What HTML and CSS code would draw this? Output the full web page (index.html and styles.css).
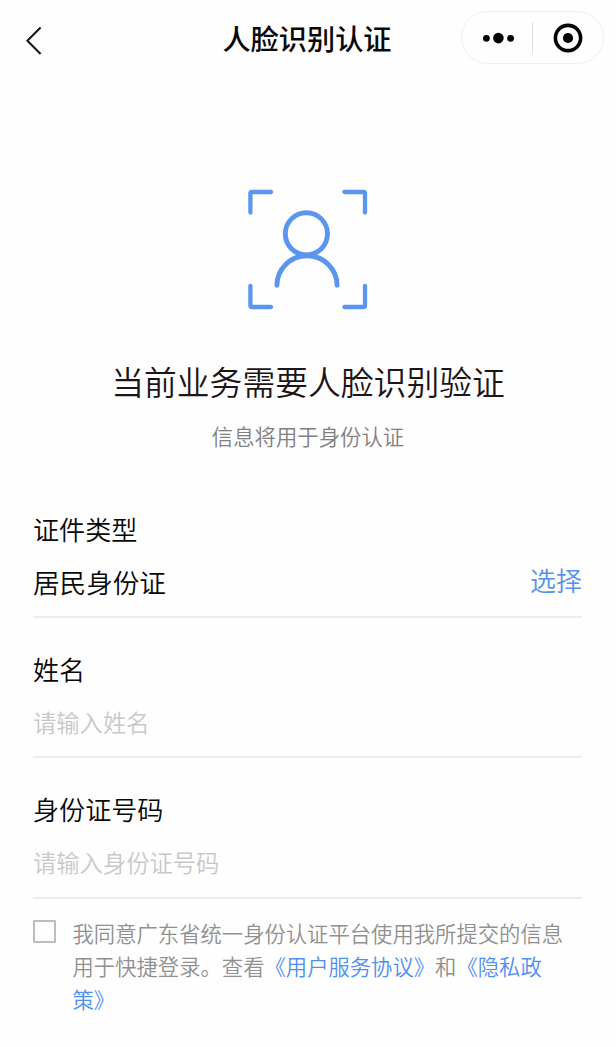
FILE: index.html
```html
<!DOCTYPE html>
<html lang="zh-CN">
<head>
<meta charset="utf-8">
<title>人脸识别认证</title>
<link rel="stylesheet" href="styles.css">
</head>
<body>
<header class="navbar">
  <svg class="back" viewBox="0 0 20 32" fill="none" stroke="#1a1a1a" stroke-width="2.1"><path d="M16.6 2.6 3.4 15.8 16.6 29"/></svg>
  <h1 class="title">人脸识别认证</h1>
  <div class="capsule">
    <svg class="dots" viewBox="0 0 32 12"><circle cx="4.4" cy="6.3" r="3.4"/><circle cx="16.4" cy="6.1" r="5.3"/><circle cx="28.6" cy="6.3" r="3.4"/></svg>
    <span class="split"></span>
    <svg class="target" viewBox="0 0 30 30"><circle cx="15" cy="15" r="12.6" fill="none" stroke="#000" stroke-width="3.6"/><circle cx="15" cy="15" r="5.1"/></svg>
  </div>
</header>
<main class="page">
  <section class="intro">
    <svg class="face" viewBox="0 0 120 120" fill="none" stroke="#5a95ef" stroke-linecap="round" stroke-linejoin="round">
      <g stroke-width="4.3"><path d="M2.4 22.5V3.5Q2.4 2 3.9 2H23"/><path d="M96.4 2H115.5Q117 2 117 3.5V22.5"/><path d="M2.4 96V115.5Q2.4 117 3.9 117H23"/><path d="M96.4 117H115.5Q117 117 117 115.5V96"/></g>
      <circle cx="58.4" cy="43.8" r="21.1" stroke-width="4.9"/>
      <path d="M28.9 95.3a30.1 29.6 0 0 1 60.2 0" stroke-width="4.9"/>
    </svg>
    <h2 class="heading">当前业务需要人脸识别验证</h2>
    <p class="hint">信息将用于身份认证</p>
  </section>
  <form class="form">
    <div class="field">
      <div class="label">证件类型</div>
      <div class="row"><span class="value">居民身份证</span><a class="pick">选择</a></div>
    </div>
    <div class="field">
      <div class="label">姓名</div>
      <div class="row placeholder">请输入姓名</div>
    </div>
    <div class="field last">
      <div class="label">身份证号码</div>
      <div class="row placeholder">请输入身份证号码</div>
    </div>
    <div class="agree">
      <span class="checkbox"></span>
      <p class="terms">我同意广东省统一身份认证平台使用我所提交的信息<br>用于快捷登录。查看<a class="link">《用户服务协议》</a>和<a class="link">《隐私政<br>策》</a></p>
    </div>
  </form>
</main>
</body>
</html>
```
FILE: styles.css
```css
* { box-sizing: border-box; }
body {
  margin: 0;
  background: #fefefe;
  color: #080808;
  font-family: "Noto Sans CJK SC", sans-serif;
  font-weight: 350;
}
h1, h2, p { margin: 0; font-weight: inherit; }
svg { display: block; }
.navbar {
  display: grid;
  grid-template-columns: 1fr auto 1fr;
  align-items: center;
  height: 75px;
  padding: 0 12px 0 24px;
}
.back { width: 20px; height: 32px; margin-top: 7px; }
.title {
  font-size: 28.2px;
  font-weight: 500;
  line-height: 40px;
  margin: 0 7px 0 -7px;
}
.capsule {
  justify-self: end;
  display: flex;
  align-items: center;
  width: 143px;
  height: 53px;
  padding-left: 20px;
  border: 1px solid #efefef;
  border-radius: 27px;
}
.dots { width: 32px; height: 12px; }
.split { width: 1px; height: 31px; margin-left: 18px; background: #dedede; }
.target { width: 30px; height: 30px; margin-left: 20px; }
.intro {
  display: flex;
  flex-direction: column;
  align-items: center;
  padding-top: 115px;
}
.face { width: 120px; height: 120px; overflow: visible; }
.heading {
  margin-top: 46px;
  font-size: 32.8px;
  line-height: 50px;
  color: #1c1416;
}
.hint {
  margin-top: 14px;
  font-size: 21.4px;
  line-height: 32px;
  color: #808080;
}
.form { padding: 26px 34px 0 33px; }
.field {
  height: 140px;
  padding-top: 31px;
  border-bottom: 2px solid #ececec;
}
.last { height: 140.5px; }
.label { font-size: 26.1px; line-height: 40px; }
.row {
  display: flex;
  justify-content: space-between;
  margin-top: 13px;
  font-size: 26.6px;
  line-height: 40px;
}
.pick { font-size: 26px; line-height: 36px; color: #5590f0; }
.placeholder { font-size: 23.3px; color: #c8c8c8; }
.agree { display: flex; gap: 16.5px; padding-top: 17px; }
.checkbox {
  flex: none;
  width: 23px;
  height: 23px;
  margin-top: 4px;
  border: 2px solid #bdbdbd;
  border-radius: 1px;
}
.terms {
  font-size: 21.33px;
  line-height: 33px;
  white-space: nowrap;
  color: #909090;
}
.link { color: #4e8ff2; }
```
